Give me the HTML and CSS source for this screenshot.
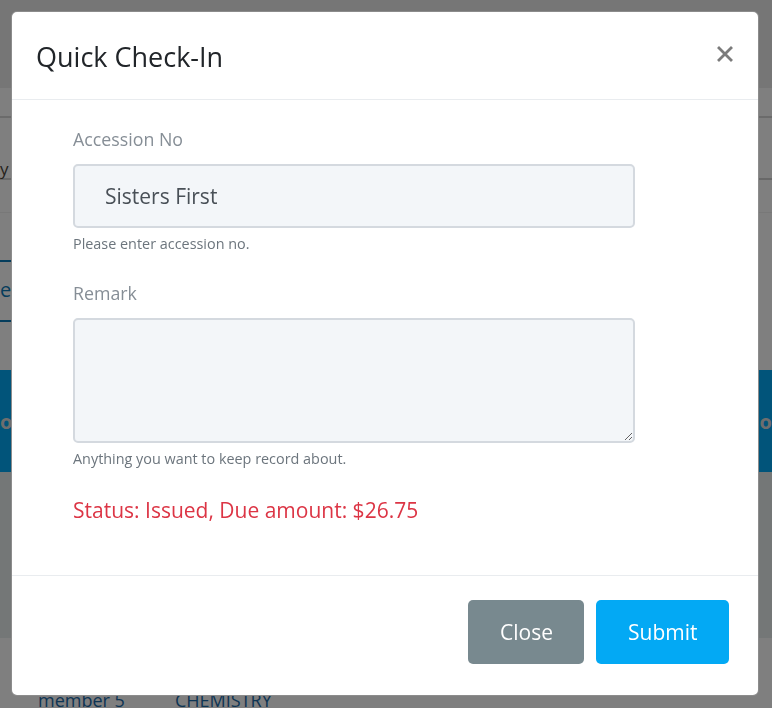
FILE: index.html
```html
<!DOCTYPE html>
<html lang="en">
<head>
<meta charset="utf-8">
<title>Quick Check-In</title>
<link rel="stylesheet" href="styles.css">
</head>
<body>
<div class="page">
  <div class="bg-topbar"></div>
  <div class="bg-row bg-row-a"></div>
  <div class="bg-row bg-row-b"><span class="bg-search">y r</span></div>
  <div class="bg-row bg-row-c"></div>
  <div class="bg-tabs"><span class="bg-tab">er</span></div>
  <div class="bg-gap"></div>
  <div class="bg-thead"><span class="th-left">o</span><span class="th-right">lo</span></div>
  <div class="bg-tinted"></div>
  <div class="bg-gap2"></div>
  <div class="bg-trow"><span class="c1">member 5</span><span class="c2">CHEMISTRY</span></div>
</div>
<div class="backdrop"></div>
<div class="modal">
  <div class="modal-header">
    <h5 class="modal-title">Quick Check-In</h5>
    <button class="close" type="button" aria-label="Close">
      <svg width="16" height="16" viewBox="0 0 16 16"><path d="M2 2 L14 14 M14 2 L2 14" stroke="#7b7b7b" stroke-width="2.8" stroke-linecap="square"/></svg>
    </button>
  </div>
  <div class="modal-body">
    <div class="form-group">
      <label class="label">Accession No</label>
      <input class="control" type="text" value="Sisters First">
      <small class="help">Please enter accession no.</small>
    </div>
    <div class="form-group">
      <label class="label">Remark</label>
      <textarea class="control area"></textarea>
      <small class="help">Anything you want to keep record about.</small>
    </div>
    <p class="status">Status: Issued, Due amount: $26.75</p>
  </div>
  <div class="modal-footer">
    <button class="btn btn-close" type="button">Close</button>
    <button class="btn btn-submit" type="button">Submit</button>
  </div>
</div>
</body>
</html>
```
FILE: styles.css
```css
* { box-sizing: border-box; }
html, body { margin: 0; padding: 0; }
body {
  font-family: "Open Sans", "Noto Sans", sans-serif;
  background: #ffffff;
  width: 772px;
  height: 708px;
  overflow: hidden;
}
.page { width: 772px; }
.bg-topbar { height: 88px; background: #ececec; }
.bg-row { background: #ffffff; }
.bg-row-a { height: 30px; border-bottom: 2px solid #d6d6d6; }
.bg-row-b {
  height: 62px;
  border-bottom: 2px solid #d0d0d0;
  padding: 41px 0 0 0;
  font-size: 17px;
  line-height: 20px;
  color: #4a443a;
}
.bg-search { display: inline-block; margin-left: 0; letter-spacing: 1px; }
.bg-row-c { height: 33px; border-bottom: 1px solid #f0f0f0; }
.bg-tabs {
  height: 62px;
  margin-top: 47px;
  border-top: 2px solid #0a7ab8;
  border-bottom: 2px solid #0a7ab8;
  width: 12px;
  overflow: hidden;
  color: #0a7ab8;
  font-size: 20px;
  line-height: 56px;
}
.bg-tab { display: inline-block; margin-left: 0; }
.bg-gap { height: 48px; }
.bg-thead {
  height: 102px;
  background: #03a9f4;
  color: #dddddd;
  font-weight: 700;
  font-size: 20px;
  display: flex;
  justify-content: space-between;
  align-items: center;
}
.th-left { margin-left: 0; }
.th-right { margin-right: 0; }
.bg-tinted { height: 166px; background: #e8efef; }
.bg-gap2 { height: 50px; }
.bg-trow { font-size: 18px; color: #1a6aa8; line-height: 24px; display: flex; }
.bg-trow .c1 { margin-left: 38px; width: 137px; }
.backdrop {
  position: fixed;
  inset: 0;
  background: rgba(0, 0, 0, 0.5);
}
.modal {
  position: fixed;
  top: 11px;
  left: 11px;
  width: 748px;
  background: #ffffff;
  border: 1px solid rgba(0, 0, 0, 0.45);
  border-radius: 6px;
  display: flex;
  flex-direction: column;
}
.modal-header {
  display: flex;
  align-items: center;
  justify-content: space-between;
  height: 88px;
  padding: 0 25px 0 24px;
  border-bottom: 1px solid #e9ecef;
}
.modal-title {
  margin: 0;
  font-size: 27px;
  font-weight: 400;
  color: #212529;
  line-height: 39px;
  padding-top: 2px;
}
.close {
  border: 0;
  background: none;
  padding: 0;
  width: 16px;
  height: 16px;
  display: flex;
  margin-top: -3px;
}
.modal-body {
  padding: 26px 123px 50px 61px;
}
.form-group { display: flex; flex-direction: column; margin-bottom: 26px; }
.label {
  font-size: 17.8px;
  line-height: 26px;
  color: #868e96;
  margin-bottom: 12px;
}
.control {
  width: 562px;
  height: 64px;
  border: 2px solid #d4d9df;
  border-radius: 5px;
  background: #f3f6f9;
  font-family: "Open Sans", "Noto Sans", sans-serif;
  font-size: 21px;
  color: #495057;
  padding: 0 30px;
  margin: 0;
  outline: none;
}
.area { height: 125px; resize: vertical; display: block; }
.help {
  font-size: 14.4px;
  line-height: 20px;
  color: #6c757d;
  margin-top: 6px;
}
.status {
  margin: 0;
  font-size: 21px;
  line-height: 30px;
  color: #dc3545;
  margin-top: 1px;
}
.modal-footer {
  display: flex;
  justify-content: flex-end;
  gap: 12px;
  border-top: 1px solid #e9ecef;
  padding: 24px 29px 31px 24px;
}
.btn {
  height: 64px;
  border: 0;
  border-radius: 5px;
  color: #ffffff;
  font-family: "Open Sans", "Noto Sans", sans-serif;
  font-size: 21px;
  padding: 0 32px;
}
.btn-close { background: #78898f; width: 116px; }
.btn-submit { background: #03a9f4; width: 133px; }
```
